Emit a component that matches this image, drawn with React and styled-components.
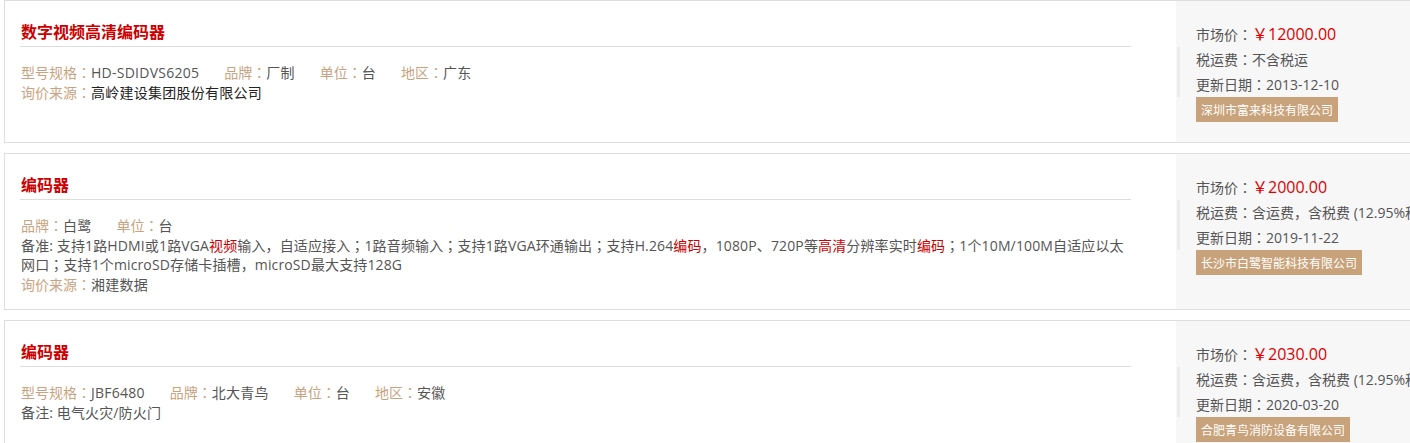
import React from 'react'
import styled, { createGlobalStyle } from 'styled-components'

const FONT = `"Open Sans", "Noto Sans CJK SC", sans-serif`

const items = [
    {
        title: '数字视频高清编码器',
        fields: [['型号规格', 'HD-SDIDVS6205'], ['品牌', '厂制'], ['单位', '台'], ['地区', '广东']],
        source: '高岭建设集团股份有限公司',
        sourceDark: true,
        price: '￥12000.00',
        tax: '不含税运',
        date: '2013-12-10',
        company: '深圳市富来科技有限公司',
    },
    {
        title: '编码器',
        fields: [['品牌', '白鹭'], ['单位', '台']],
        note: [
            '备准: 支持1路HDMI或1路VGA', ['视频'], '输入，自适应接入；1路音频输入；支持1路VGA环通输出；支持H.264', ['编码'],
            '，1080P、720P等', ['高清'], '分辨率实时', ['编码'],
            '；1个10M/100M自适应以太网口；支持1个microSD存储卡插槽，microSD最大支持128G',
        ],
        source: '湘建数据',
        price: '￥2000.00',
        tax: '含运费，含税费 (12.95%税率)',
        date: '2019-11-22',
        company: '长沙市白鹭智能科技有限公司',
    },
    {
        title: '编码器',
        fields: [['型号规格', 'JBF6480'], ['品牌', '北大青鸟'], ['单位', '台'], ['地区', '安徽']],
        note: ['备注: 电气火灾/防火门'],
        price: '￥2030.00',
        tax: '含运费，含税费 (12.95%税率)',
        date: '2020-03-20',
        company: '合肥青鸟消防设备有限公司',
    },
]

// full-width colon / semicolon sit centred in the reference font
function Text({ children }) {
    return children.split(/([：；])/).map((part, i) =>
        part === '：' || part === '；' ? <Punct key={i}>{part}</Punct> : part
    )
}

function Card({ item }) {
    return (
        <CardBox>
            <Main>
                <Title>{item.title}</Title>
                <Fields>
                    {item.fields.map(([label, value]) => (
                        <Field key={label}>
                            <Label>{label}<Punct>：</Punct></Label>
                            <Value>{value}</Value>
                        </Field>
                    ))}
                </Fields>
                {item.note && (
                    <Note>
                        {item.note.map((seg, i) =>
                            Array.isArray(seg) ? <Mark key={i}>{seg[0]}</Mark> : <Text key={i}>{seg}</Text>
                        )}
                    </Note>
                )}
                {item.source && (
                    <Line>
                        <Label>询价来源<Punct>：</Punct></Label>
                        <Value $dark={item.sourceDark}>{item.source}</Value>
                    </Line>
                )}
            </Main>
            <Side>
                <SideRow>
                    市场价<Punct>：</Punct><Price>{item.price}</Price>
                </SideRow>
                <SideGroup>
                    <SideRow $inner>税运费<Punct>：</Punct>{item.tax}</SideRow>
                    <SideRow $inner>更新日期<Punct>：</Punct>{item.date}</SideRow>
                </SideGroup>
                <Company>{item.company}</Company>
            </Side>
        </CardBox>
    )
}

export default function App() {
    return (
        <>
            <GlobalStyle />
            <List>
                {items.map((item, i) => <Card key={i} item={item} />)}
            </List>
        </>
    )
}

const GlobalStyle = createGlobalStyle`
    html, body {
        margin: 0;
        padding: 0;
        background: #fff;
        overflow: hidden;
    }
    body {
        font-family: ${FONT};
        font-size: 14px;
        color: #555;
    }
`

const List = styled.div`
    width: 1430px;
    padding-left: 4px;
    display: flex;
    flex-direction: column;
    gap: 10px;
`

const CardBox = styled.div`
    display: flex;
    border: 1px solid #dedede;
    background: #fff;
`

const Main = styled.div`
    flex: 0 0 1111px;
    padding: 0 45px 15px 15px;
`

const Title = styled.h3`
    margin: 0 0 16px;
    padding: 19px 0 4px 1px;
    font-family: "Noto Sans CJK SC", sans-serif;
    font-size: 16px;
    line-height: 22px;
    font-weight: bold;
    color: #cc0000;
    border-bottom: 1px solid #dddddd;
`

const Fields = styled.div`
    display: flex;
    gap: 25px;
    line-height: 19.5px;
    padding-left: 1px;
`

const Field = styled.span`
    white-space: nowrap;
`

const Label = styled.span`
    color: #c9a37f;
`

const Punct = styled.span`
    font-family: "Noto Sans CJK JP", sans-serif;
    line-height: 0;
`

const Value = styled.span`
    color: ${p => (p.$dark ? '#222' : '#555')};
    letter-spacing: 0.25px;
`

const Note = styled.div`
    line-height: 19.5px;
    padding-left: 1px;
    letter-spacing: 0.13px;
    color: #555;
`

const Mark = styled.span`
    color: #cc0000;
`

const Line = styled.div`
    line-height: 19.5px;
    padding-left: 1px;
`

const Side = styled.div`
    flex: 1;
    min-width: 0;
    background: #f7f7f7;
    padding: 21px 0 20px;
`

const SideRow = styled.div`
    line-height: 25px;
    padding-left: ${p => (p.$inner ? '16px' : '20px')};
    white-space: nowrap;
    color: #555;
`

const SideGroup = styled.div`
    margin-left: 1px;
    border-left: 3px solid #ebebeb;
`

const Price = styled.span`
    font-size: 16px;
    color: #dd0000;
`

const Company = styled.div`
    display: inline-block;
    margin-left: 20px;
    padding: 0 5px;
    line-height: 25px;
    font-family: "Noto Sans CJK SC", sans-serif;
    font-size: 12px;
    color: #fff;
    background: #c8a27a;
`
